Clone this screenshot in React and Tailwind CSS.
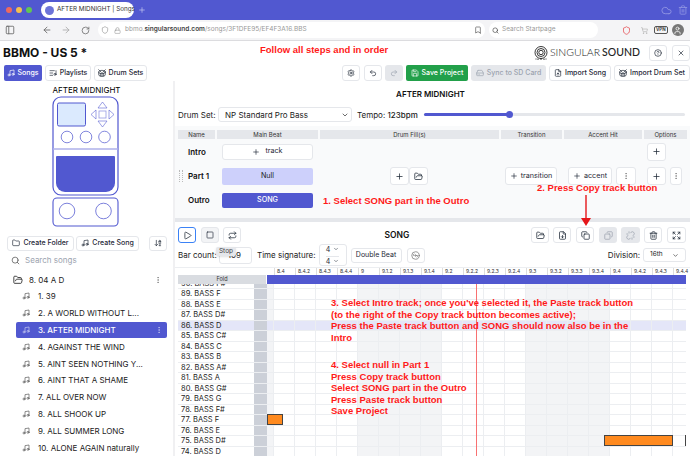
import React from 'react';
import {
  ArrowDownAZ, ArrowLeft, ArrowRight, Bookmark, Cloud, Copy, Drum, EllipsisVertical, FileDown, FileUp, Folder, FolderOpen,
  Expand, ListMusic, Lock, Music, PanelLeft, Play, Plus, Redo2, Repeat, RotateCw, Save, Search, Settings, Shield, ShoppingCart,
  Square, Trash2, Undo2, Unlink, User, X, ChevronDown, HardDrive, Disc3, HelpCircle,
} from 'lucide-react';

const songs = [
  '1. 39', '2. A WORLD WITHOUT L...', '3. AFTER MIDNIGHT', '4. AGAINST THE WIND', '5. AINT SEEN NOTHING Y...',
  '6. AINT THAT A SHAME', '7. ALL OVER NOW', '8. ALL SHOOK UP', '9. ALL SUMMER LONG', '10. ALONE AGAIN naturally',
];

const tracks = [
  '90. BASS F#', '89. BASS F', '88. BASS E', '87. BASS D#', '86. BASS D', '85. BASS C#', '84. BASS C', '83. BASS B', '82. BASS A#',
  '81. BASS A', '80. BASS G#', '79. BASS G', '78. BASS F#', '77. BASS F', '76. BASS E', '75. BASS D#', '74. BASS D',
];

const ruler = [
  '8.4', '8.4.2', '8.4.3', '8.4.4', '9', '9.1.2', '9.1.3', '9.1.4', '9.2', '9.2.2', '9.2.3', '9.2.4',
  '9.3', '9.3.2', '9.3.3', '9.3.4', '9.4', '9.4.2', '9.4.3', '9.4.4',
];

const cells = ruler.map((_, i) => i);

const tones = {
  plain: 'border-[#e5e7eb] bg-white text-[#1f2937]',
  off: 'border-transparent bg-[#e5e7eb] text-[#9ca3af]',
  focus: 'border-[#3b82f6] bg-white text-[#1f2937]',
  soft: 'border-[#e5e7eb] bg-[#f3f4f6] text-[#1f2937]',
};

// small outlined button used all over the toolbar, font size comes from the parent
const Btn = ({ children, className = '', tone = 'plain' }) => (
  <div className={`flex items-center justify-center gap-[3px] whitespace-nowrap rounded-[3px] border ${tones[tone]} ${className}`}>
    {children}
  </div>
);

const PedalIcon = () => (
  <svg width="68" height="132" viewBox="0 0 68 132" fill="none" stroke="#5158d0">
    <rect x="1" y="1" width="65" height="98" rx="8" strokeWidth="1.2" fill="#fff" />
    <rect x="5.5" y="7" width="28" height="23" rx="1.5" fill="#dbeafe" strokeWidth="1" />
    <rect x="47" y="15" width="7" height="7" strokeOpacity=".6" strokeWidth=".8" />
    <path d="M50.5 6 55 12H46ZM50.5 31 55 25H46ZM39 18.5l5-4.5v9ZM62 18.5l-5-4.5v9Z" strokeOpacity=".7" strokeWidth=".8" />
    <circle cx="15" cy="41" r="5.8" strokeOpacity=".8" strokeWidth=".9" />
    <circle cx="34" cy="41" r="5.8" strokeOpacity=".8" strokeWidth=".9" />
    <circle cx="52.5" cy="41" r="5.8" strokeOpacity=".8" strokeWidth=".9" />
    <path d="M1 53H66" stroke="#aeb1ea" strokeWidth="1.5" />
    <path d="M4 61a1 1 0 0 1 1-1h57a1 1 0 0 1 1 1v26a9 9 0 0 1-9 9H13a9 9 0 0 1-9-9Z" fill="#5158d0" stroke="none" />
    <rect x="1" y="102" width="65" height="28" rx="4" strokeWidth="1.1" fill="#fff" />
    <circle cx="15" cy="115" r="7.8" strokeOpacity=".85" strokeWidth=".9" />
    <circle cx="51.5" cy="115" r="7.8" strokeOpacity=".85" strokeWidth=".9" />
  </svg>
);

const LogoMark = () => (
  <svg width="16" height="14" viewBox="0 0 16 14" fill="none" stroke="#222" strokeWidth=".9">
    <circle cx="8" cy="6.5" r="6" />
    <circle cx="8" cy="6.5" r="4" />
    <circle cx="8" cy="6.5" r="2.2" />
    <path d="M3 12.5v1M5 12.5v1.5M8 12v2M11 12.5v1.5M13 12.5v1" />
  </svg>
);

const BrowserBar = () => (
  <>
    <div className="flex h-5 items-center bg-[#5158d0] pl-[6px]">
      <div className="flex w-[30px] gap-[4px]">
        <span className="h-[6px] w-[6px] rounded-full bg-[#ed6a5e]" />
        <span className="h-[6px] w-[6px] rounded-full bg-[#f4bf4f]" />
        <span className="h-[6px] w-[6px] rounded-full bg-[#61c554]" />
      </div>
      <div className="ml-[5px] flex h-4 w-[93px] items-center gap-[3px] rounded-full bg-white px-[4px] text-[6.3px] text-[#333]">
        <span className="h-[9px] w-[9px] shrink-0 rounded-full bg-[#6d74d8]" />
        <span className="whitespace-nowrap">AFTER MIDNIGHT | Songs</span>
      </div>
      <Plus size={8} className="ml-1 text-[#c9ccf2]" />
      <div className="ml-auto flex items-center gap-[6px] pr-[2px] text-[#8f94e2]">
        <Cloud size={11} />
        <Trash2 size={10} />
      </div>
    </div>
    <div className="flex h-[21px] items-center border-b border-[#dcdcdf] bg-[#f4f4f6] pl-[5px] text-[#666]">
      <PanelLeft size={10} />
      <ArrowLeft size={10} className="ml-[27px]" />
      <ArrowRight size={10} className="ml-[9px] text-[#aaa]" />
      <RotateCw size={9} className="ml-[10px]" />
      <div className="ml-[8px] flex h-4 w-[387px] items-center rounded-full bg-white pl-[3px] pr-[2px] text-[6.5px] text-[#999]">
        <Shield size={8} />
        <Lock size={7} className="ml-[5px] mr-[4px]" />
        <span>bbmo.<span className="font-semibold text-[#444]">singularsound.com</span>/songs/3F1DFE95/EF4F3A16.BBS</span>
        <Bookmark size={8} className="ml-auto mr-[1px] text-[#555]" />
      </div>
      <div className="ml-[4px] flex h-4 w-[109px] items-center gap-[3px] rounded-full bg-white pl-[3px] text-[6.5px] text-[#999]">
        <Search size={7} className="text-[#333]" />
        <span>Search Startpage</span>
      </div>
      <Shield size={9} className="ml-[24px] text-[#e5484d]" />
      <ShoppingCart size={7} className="ml-[10px] text-[#aaa]" />
      <div className="ml-[6px] rounded-[2px] border border-[#555] px-[1px] text-[4.5px] font-bold leading-[6px] text-[#444]">VPN</div>
      <div className="ml-[4px] flex h-3 w-3 items-center justify-center rounded-full bg-[#777]">
        <User size={9} className="text-white" />
      </div>
    </div>
  </>
);

const Sidebar = () => (
  <aside className="flex h-full w-[175px] shrink-0 flex-col overflow-hidden border-r-2 border-[#f0f0f2]">
    <div className="mt-[4px] text-center text-[8px] leading-[11px] text-black">AFTER MIDNIGHT</div>
    <div className="flex justify-center pr-px">
      <PedalIcon />
    </div>
    <div className="mt-[8px] flex h-4 items-stretch pl-[7px] text-[7px]">
      <Btn className="w-[67px] font-medium"><Folder size={8} />Create Folder</Btn>
      <Btn className="ml-[2px] w-[63px] font-medium"><Music size={8} />Create Song</Btn>
      <Btn className="ml-[10px] w-[18px]"><ArrowDownAZ size={8} /></Btn>
    </div>
    <div className="mt-[2px] flex h-4 items-center gap-[5px] pl-[11px] text-[8px] text-[#9ca3af]">
      <Search size={9} className="text-[#555]" />
      Search songs
    </div>
    <div className="mt-[3.5px] flex h-[17px] shrink-0 items-center pl-[13px] pr-[11px] text-[8px] text-[#222]">
      <FolderOpen size={10} />
      <span className="ml-[6px]">8. 04 A D</span>
      <EllipsisVertical size={8} className="ml-auto text-[#777]" />
    </div>
    {songs.map((s, i) => (
      <div
        key={s}
        className={`ml-4 mr-[6px] flex h-[16.8px] shrink-0 items-center rounded-[2px] pl-[6px] pr-[4px] text-[8px] whitespace-nowrap ${i === 2 ? 'bg-[#5158d0] font-medium text-white' : 'text-[#222]'}`}
      >
        <Music size={8} className={i === 2 ? 'text-[#c9ccf2]' : 'text-[#555]'} />
        <span className="ml-[8px]">{s}</span>
        {i === 2 && <EllipsisVertical size={8} className="ml-auto text-[#c9ccf2]" />}
      </div>
    ))}
  </aside>
);

const TableHead = ({ children, className = '' }) => (
  <div className={`h-[9px] bg-[#e5e7eb] text-center text-[6px] leading-[9px] text-[#333] ${className}`}>{children}</div>
);

const PartsTable = () => (
  <div className="mt-[4px] h-[92px] bg-[#f9fafb] pl-[3px] pt-[4px] text-[7.2px]">
    <div className="flex gap-[2px]">
      <TableHead className="w-[37px]">Name</TableHead>
      <TableHead className="w-[101px]">Main Beat</TableHead>
      <TableHead className="w-[179px]">Drum Fill(s)</TableHead>
      <TableHead className="w-[61px]">Transition</TableHead>
      <TableHead className="w-[78px]">Accent Hit</TableHead>
      <TableHead className="w-[43px]">Options</TableHead>
    </div>
    <div className="mt-[4px] flex h-[17px] items-center">
      <div className="w-[44px] pl-[10px] text-[8px] font-semibold text-[#111]">Intro</div>
      <Btn className="h-[16px] w-[91px]"><Plus size={8} /><span className="ml-[2px]">track</span></Btn>
      <Btn className="ml-[334px] h-[18px] w-[19px]"><Plus size={9} /></Btn>
    </div>
    <div className="mt-[7px] flex h-[18px] items-center">
      <div className="flex w-[44px] items-center pl-px text-[8px] font-semibold text-[#111]">
        <span className="h-[12px] w-[4px] border-x border-dotted border-[#bbb]" />
        <span className="ml-[5px]">Part 1</span>
      </div>
      <div className="flex h-[17px] w-[91px] items-center justify-center rounded-[2px] bg-[#cdd0fb] text-[#222]">Null</div>
      <Btn className="ml-[77px] h-[18px] w-[19px]"><Plus size={9} /></Btn>
      <Btn className="h-[18px] w-[19px]"><FolderOpen size={9} /></Btn>
      <Btn className="ml-[77px] h-[18px] w-[52px]"><Plus size={8} />transition</Btn>
      <Btn className="ml-[11px] h-[18px] w-[44px]"><Plus size={8} />accent</Btn>
      <Btn className="ml-[4px] h-[18px] w-[20px]"><EllipsisVertical size={8} className="text-[#777]" /></Btn>
      <Btn className="ml-[11px] h-[18px] w-[19px]"><Plus size={9} /></Btn>
      <Btn className="ml-[4px] h-[18px] w-[12px]"><EllipsisVertical size={8} className="text-[#777]" /></Btn>
    </div>
    <div className="mt-[7px] flex h-[16px] items-center">
      <div className="w-[44px] pl-[10px] text-[8px] font-semibold text-[#111]">Outro</div>
      <div className="flex h-[15px] w-[91px] items-center justify-center rounded-[2px] bg-[#5158d0] font-medium text-white">SONG</div>
    </div>
  </div>
);

const TrackRow = ({ label, index }) => {
  const active = index === 4;
  return (
    <div className={`relative flex h-[10.5px] shrink-0 border-b border-[#eceef1] ${active ? 'bg-[#e4e6f8]' : 'bg-white'}`}>
      <div className="w-[76px] shrink-0 pl-[3px] text-[7.5px] leading-[10px] whitespace-nowrap text-[#222]">{label}</div>
      <div className="w-[13px] shrink-0 bg-[#ccd0d8]" />
      <div className={`w-[7px] shrink-0 border-r border-[#eceef1] ${active ? '' : 'bg-[#f3f4f6]'}`} />
      {cells.map(c => {
        const dark = (c >= 4 && c < 8) || (c >= 12 && c < 16);
        return <div key={c} className={`w-[21px] shrink-0 border-r border-[#eceef1] ${dark && !active ? 'bg-[#f3f4f6]' : ''}`} />;
      })}
      {index === 13 && (
        <div className="absolute -top-px left-[89px] h-[11px] w-[16px] border border-[#444] bg-[#ff8a1f]" />
      )}
      {index === 15 && (
        <>
          <div className="absolute -top-px left-[426px] h-[11px] w-[69px] border border-[#444] bg-[#ff8a1f]" />
          <div className="absolute -top-px left-[507px] h-[11px] w-[4px] border border-[#444] bg-[#ff8a1f]" />
        </>
      )}
    </div>
  );
};

const SongEditor = () => (
  <section className="flex min-h-0 flex-1 flex-col overflow-hidden">
    <div className="mt-[5px] flex h-4 shrink-0 items-stretch pl-[3px] pr-[4px] text-[8px]">
      <Btn tone="focus" className="w-[18px]"><Play size={9} /></Btn>
      <Btn tone="soft" className="ml-[5px] w-[18px]"><Square size={8} /></Btn>
      <Btn className="ml-[4px] w-[18px]"><Repeat size={9} /></Btn>
      <div className="flex w-[290px] items-center justify-center pl-[22px] text-[8.5px] font-semibold text-[#111]">SONG</div>
      <Btn className="w-[18px]"><FolderOpen size={9} /></Btn>
      <Btn className="ml-[4px] w-[18px]"><FileDown size={9} /></Btn>
      <Btn className="ml-[5px] w-[18px]"><Copy size={9} /></Btn>
      <Btn tone="off" className="ml-[5px] w-[18px]"><Copy size={9} className="-scale-x-100" /></Btn>
      <Btn tone="off" className="ml-[4px] w-[19px]"><Unlink size={9} /></Btn>
      <Btn className="ml-[4px] w-[18px]"><Trash2 size={9} /></Btn>
      <Btn className="ml-[5px] w-[19px]"><Expand size={9} /></Btn>
    </div>
    <div className="relative flex h-[24px] shrink-0 items-center pl-[3px] pr-[4px] text-[8px] text-[#222]">
      <span className="w-[41px] whitespace-nowrap">Bar count:</span>
      <div className="flex h-[17px] w-[33px] items-center justify-end rounded-[3px] border border-[#e5e7eb] pr-[10px]">109</div>
      <span className="ml-[5px]">Time signature:</span>
      <Btn className="ml-[3px] h-[22px] w-[28px] flex-col gap-0 text-[7px]">
        <span className="flex h-[10px] items-center gap-[3px] leading-none">4<ChevronDown size={6} /></span>
        <span className="flex h-[10px] items-center gap-[3px] border-t border-[#e5e7eb] leading-none">4<ChevronDown size={6} /></span>
      </Btn>
      <Btn className="ml-[4px] h-[15px] w-[51px] text-[7px]">Double Beat</Btn>
      <Btn className="ml-[5px] h-[15px] w-[18px]"><Disc3 size={9} className="text-[#777]" /></Btn>
      <span className="ml-auto">Division:</span>
      <div className="ml-[3px] flex h-[14px] w-[43px] items-center justify-between rounded-[3px] border border-[#e5e7eb] px-[6px] text-[6.5px]">16th<ChevronDown size={7} /></div>
      <div className="absolute left-[41px] top-[4px] w-[20px] rounded-[2px] bg-[#e5e7eb] text-center text-[6.5px] leading-[9px] text-[#444] shadow-sm">Stop</div>
    </div>
    <div className="flex h-[8px] shrink-0 border-t border-[#eceef1]">
      <div className="w-[99px] shrink-0" />
      {ruler.map(r => (
        <div key={r} className="w-[21px] shrink-0 border-l border-[#ddd] pl-[2px] text-[5px] leading-[7px] whitespace-nowrap text-[#333]">{r}</div>
      ))}
    </div>
    <div className="flex h-[9px] shrink-0 pl-[3px] pr-[4px]">
      <div className="w-[88px] shrink-0 bg-[#d9dce1] text-center text-[5.5px] leading-[9px] text-[#333]">Fold</div>
      <div className="ml-px flex-1 bg-[#5158d0]" />
    </div>
    <div className="min-h-0 flex-1 pl-[3px] pr-[4px]">
      <div className="relative h-full overflow-hidden">
        <div className="-mt-[5.5px] flex flex-col">
          {tracks.map((t, i) => (
            <TrackRow key={t} label={t} index={i} />
          ))}
        </div>
        <div className="absolute bottom-0 left-[298px] top-0 w-px bg-[#f87171]" />
      </div>
    </div>
  </section>
);

// red notes that were painted on top of the screenshot
const Note = ({ className, children }) => (
  <div className={`absolute font-['Liberation_Sans',Arial,sans-serif] text-[9.5px] font-bold leading-[11.5px] whitespace-nowrap text-[#ff1a1a] ${className}`}>
    {children}
  </div>
);

export default function App() {
  return (
    <div className="relative h-[456px] w-[690px] overflow-hidden bg-white font-['Inter',sans-serif]">
      <BrowserBar />
      <div className="flex h-[24px] items-center pl-[3px]">
        <h1 className="text-[12px] font-bold leading-none text-[#111]">BBMO - US 5 *</h1>
        <div className="ml-auto flex items-center text-[7px] text-[#222]">
          <LogoMark />
          <span className="ml-[1px] font-['Lato',sans-serif] text-[10.5px] font-light">SINGULAR</span>
          <span className="ml-[2px] font-['Lato',sans-serif] text-[10.5px] font-medium">SOUND</span>
          <Btn className="ml-[9px] h-[16px] w-[18px]"><HelpCircle size={8} /></Btn>
          <Btn className="ml-[5px] h-[16px] w-[18px]"><X size={8} /></Btn>
        </div>
      </div>
      <div className="flex h-[16px] items-stretch pl-1 text-[7px]">
        <div className="flex w-[38px] items-center justify-center gap-[2px] rounded-[2px] bg-[#5158d0] font-medium text-white"><Music size={8} />Songs</div>
        <Btn className="ml-[3px] w-[46px] font-medium"><ListMusic size={8} />Playlists</Btn>
        <Btn className="ml-[3px] w-[53px] font-medium"><Drum size={8} />Drum Sets</Btn>
        <Btn className="ml-[195px] w-[18px]"><Settings size={8} /></Btn>
        <Btn className="ml-[4px] w-[18px]"><Undo2 size={8} /></Btn>
        <Btn tone="off" className="ml-[3px] w-[18px]"><Redo2 size={8} /></Btn>
        <div className="ml-[3px] flex w-[62px] items-center justify-center gap-[3px] rounded-[2px] bg-[#22a04a] font-medium text-white"><Save size={8} />Save Project</div>
        <Btn tone="off" className="ml-[3px] w-[75px] font-medium"><HardDrive size={8} />Sync to SD Card</Btn>
        <Btn className="ml-[3px] w-[62px] font-medium"><FileUp size={8} />Import Song</Btn>
        <Btn className="ml-[3px] w-[76px] font-medium"><Drum size={8} />Import Drum Set</Btn>
      </div>
      <div className="flex h-[375px]">
        <Sidebar />
        <main className="flex min-w-0 flex-1 flex-col">
          <div className="mr-[4px] mt-[8px] text-center text-[8px] font-semibold leading-[11px] text-[#111]">AFTER MIDNIGHT</div>
          <div className="mt-[7px] flex h-[15px] shrink-0 items-center pl-[3px] text-[8px] text-[#222]">
            <span className="w-[37px] whitespace-nowrap">Drum Set:</span>
            <div className="ml-[3px] flex h-[15px] w-[134px] items-center justify-between rounded-[3px] border border-[#e5e7eb] pl-[6px] pr-[2px]">NP Standard Pro Bass<ChevronDown size={8} /></div>
            <span className="ml-[5px] w-[62px] whitespace-nowrap">Tempo: <span className="font-medium">123bpm</span></span>
            <div className="relative ml-[5px] h-[3px] w-[261px] rounded-full bg-[#e5e7eb]">
              <div className="h-full w-[85px] rounded-full bg-[#5158d0]" />
              <div className="absolute left-[82px] top-[-2px] h-[7px] w-[7px] rounded-full bg-[#5158d0]" />
            </div>
          </div>
          <PartsTable />
          <div className="h-[4px] shrink-0 bg-[#e5e7eb]" />
          <SongEditor />
        </main>
      </div>

      <Note className="left-[260px] top-[44px]">Follow all steps and in order</Note>
      <Note className="left-[323px] top-[195px]">1. Select SONG part in the Outro</Note>
      <Note className="left-[537px] top-[182px]">2. Press Copy track button</Note>
      <svg className="absolute left-[581px] top-[195px]" width="10" height="32" viewBox="0 0 10 32">
        <path d="M5 0V24" stroke="#e5161a" strokeWidth="1.4" />
        <path d="M0 23H10L5 31Z" fill="#e5161a" />
      </svg>
      <Note className="left-[331px] top-[297px]">
        3. Select Intro track; once you've selected it, the Paste track button
        <br />(to the right of the Copy track button becomes active);
        <br />Press the Paste track button and SONG should now also be in the
        <br />Intro
      </Note>
      <Note className="left-[331px] top-[359px]">
        4. Select null in Part 1
        <br />Press Copy track button
        <br />Select SONG part in the Outro
        <br />Press Paste track button
        <br />Save Project
      </Note>
    </div>
  );
}
